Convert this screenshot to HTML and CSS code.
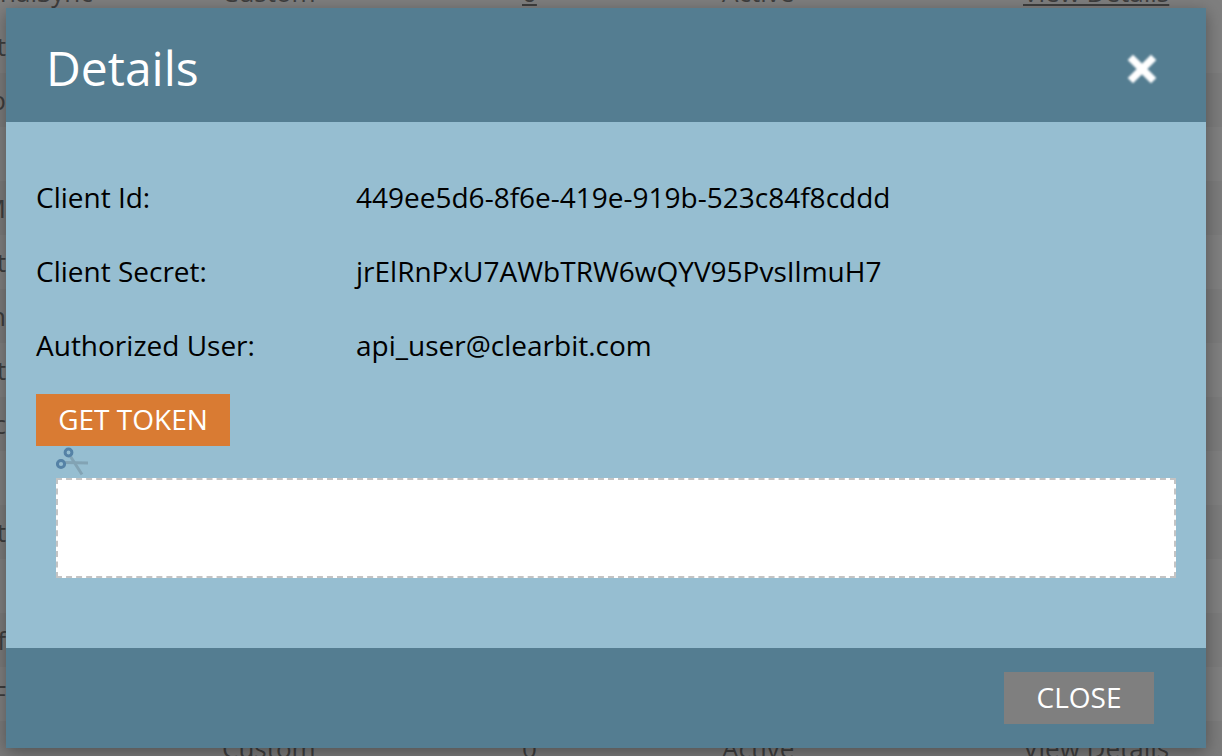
FILE: index.html
```html
<!DOCTYPE html>
<html lang="en">
<head>
<meta charset="utf-8">
<title>Details</title>
<link rel="stylesheet" href="styles.css">
</head>
<body>
<div class="page">
  <div class="row first"><span>nalSync</span><span>Custom</span><span class="num">0</span><span>Active</span><a>View Details</a></div>
  <div class="row"><span class="frag">t</span></div>
  <div class="row alt"><span class="frag">p</span></div>
  <div class="row"></div>
  <div class="row alt"><span class="frag">M</span></div>
  <div class="row"><span class="frag">t</span></div>
  <div class="row alt"><span class="frag">n</span></div>
  <div class="row"><span class="frag">t</span></div>
  <div class="row alt"><span class="frag">c</span></div>
  <div class="row"></div>
  <div class="row alt"><span class="frag">t</span></div>
  <div class="row"></div>
  <div class="row alt"><span class="frag">f</span></div>
  <div class="row"><span class="frag">F</span></div>
  <div class="row alt"><span></span><span>Custom</span><span class="num">0</span><span>Active</span><a>View Details</a></div>
</div>
<div class="modal">
  <header class="modal-head">
    <h1>Details</h1>
    <svg class="close-x" viewBox="0 0 32 32" aria-hidden="true"><path d="M7 7 L25 25 M25 7 L7 25"/></svg>
  </header>
  <main class="modal-body">
    <dl class="fields">
      <dt>Client Id:</dt><dd>449ee5d6-8f6e-419e-919b-523c84f8cddd</dd>
      <dt>Client Secret:</dt><dd>jrElRnPxU7AWbTRW6wQYV95PvsIlmuH7</dd>
      <dt>Authorized User:</dt><dd>api_user@clearbit.com</dd>
    </dl>
    <button class="btn-token">GET TOKEN</button>
    <svg class="scissors" viewBox="0 0 32 32" aria-hidden="true">
      <path class="blade" d="M14.5 10.5 L26 28.5"/>
      <path class="blade" d="M8.5 16.5 L32 17"/>
      <circle class="blue" cx="12.5" cy="6.5" r="3.4"/>
      <circle class="blue" cx="5" cy="18" r="3.6"/>
    </svg>
    <div class="token-box"></div>
  </main>
  <footer class="modal-foot"><button class="btn-close">CLOSE</button></footer>
</div>
</body>
</html>
```
FILE: styles.css
```css
html, body { margin: 0; height: 100%; overflow: hidden; }
body { background: #7f7f7f; font-family: "Open Sans", sans-serif; color: #000; }
.page { margin-top: -35px; color: #3e3e3e; font-size: 26px; }
.row {
  height: 54px;
  display: grid;
  grid-template-columns: 222px 300px 200px 301px 1fr;
  align-items: center;
  background: #7f7f7f;
  line-height: 54px;
  white-space: nowrap;
  overflow: hidden;
}
.row.alt { background: #7b7b7b; }
.row .num { text-decoration: underline; }
.row a { text-decoration: underline; }
.frag { width: 6px; display: flex; justify-content: flex-end; }
.modal {
  position: absolute;
  left: 6px;
  top: 8px;
  width: 1200px;
  height: 740px;
  display: flex;
  flex-direction: column;
  background: #96bed1;
  box-shadow: 0 4px 16px rgba(0,0,0,.35);
}
.modal-head {
  height: 114px;
  flex: none;
  background: #547d91;
  display: flex;
  align-items: center;
  justify-content: space-between;
  padding: 6px 48px 0 40px;
  box-sizing: border-box;
}
.modal-head h1 { margin: 0; font-size: 48px; font-weight: 400; color: #fff; line-height: 1; }
.close-x { width: 32px; height: 32px; margin-top: 2px; filter: blur(.8px); }
.close-x path { stroke: #fff; stroke-width: 7.5; stroke-linecap: square; fill: none; }
.modal-body { flex: 1; padding: 48px 30px 0; position: relative; }
.fields {
  display: grid;
  grid-template-columns: 320px 1fr;
  grid-auto-rows: 74px;
  margin: 0;
  font-size: 28px;
  line-height: 54px;
  height: 224px;
  align-content: start;
}
.fields dt, .fields dd { margin: 0; white-space: nowrap; }
.btn-token, .btn-close {
  display: block;
  border: 0;
  color: #fff;
  font: 400 28px/50px "Open Sans", sans-serif;
  height: 52px;
  padding: 0 0 2px;
  text-align: center;
}
.btn-token { background: #d97b33; width: 194px; }
.scissors {
  display: block;
  width: 32px;
  height: 32px;
  margin: 0 0 0 20px;
  opacity: .85;
  filter: blur(.6px);
}
.scissors .blue { fill: none; stroke: #4a789f; stroke-width: 3; }
.scissors .blade { fill: none; stroke: #7f9fb0; stroke-width: 3; }
.token-box {
  height: 100px;
  margin: 0 0 0 20px;
  box-sizing: border-box;
  background: #fff;
  border: 2px dashed #c4c4c4;
}
.modal-foot {
  height: 100px;
  flex: none;
  background: #547d91;
  display: flex;
  justify-content: flex-end;
  padding: 24px 52px 0 0;
  box-sizing: border-box;
}
.btn-close { background: #7f7f7f; width: 150px; }
```
